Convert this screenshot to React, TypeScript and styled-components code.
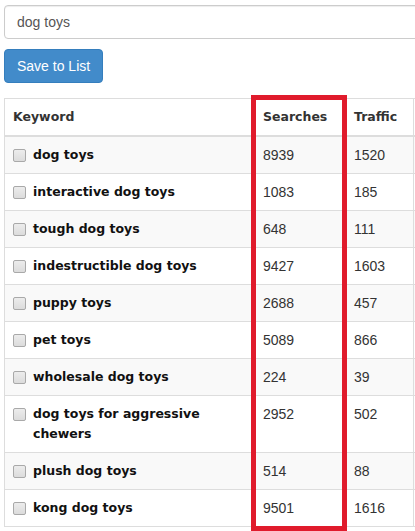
import React from "react";
import styled, { createGlobalStyle } from "styled-components";

type Row = { keyword: string; searches: number; traffic: number };

const rows: Row[] = [
  { keyword: "dog toys", searches: 8939, traffic: 1520 },
  { keyword: "interactive dog toys", searches: 1083, traffic: 185 },
  { keyword: "tough dog toys", searches: 648, traffic: 111 },
  { keyword: "indestructible dog toys", searches: 9427, traffic: 1603 },
  { keyword: "puppy toys", searches: 2688, traffic: 457 },
  { keyword: "pet toys", searches: 5089, traffic: 866 },
  { keyword: "wholesale dog toys", searches: 224, traffic: 39 },
  { keyword: "dog toys for aggressive chewers", searches: 2952, traffic: 502 },
  { keyword: "plush dog toys", searches: 514, traffic: 88 },
  { keyword: "kong dog toys", searches: 9501, traffic: 1616 },
];

const App: React.FC = () => {
  return (
    <>
      <GlobalStyle />
      <Page>
        <SearchInput defaultValue="dog toys" />
        <SaveButton>Save to List</SaveButton>
        <TableWrap>
          <KeywordTable>
            <colgroup>
              <col style={{ width: 250 }} />
              <col style={{ width: 91 }} />
              <col style={{ width: 68 }} />
              <col style={{ width: 80 }} />
            </colgroup>
            <thead>
              <tr>
                <HeadCell>Keyword</HeadCell>
                <HeadCell>Searches</HeadCell>
                <HeadCell>Traffic</HeadCell>
                <HeadCell />
              </tr>
            </thead>
            <tbody>
              {rows.map((row) => (
                <BodyRow key={row.keyword}>
                  <Cell>
                    <KeywordBox>
                      <CheckBox />
                      <KeywordText>{row.keyword}</KeywordText>
                    </KeywordBox>
                  </Cell>
                  <Cell>{row.searches}</Cell>
                  <Cell>{row.traffic}</Cell>
                  <Cell />
                </BodyRow>
              ))}
            </tbody>
          </KeywordTable>
          <Highlight />
        </TableWrap>
      </Page>
    </>
  );
};

export default App;

const GlobalStyle = createGlobalStyle`
  html, body {
    margin: 0;
    padding: 0;
    background: #fff;
    overflow: hidden;
  }
  body {
    font-family: "Liberation Sans", Arial, sans-serif;
    font-size: 14px;
    color: #333;
  }
`;

const Page = styled.div`
  width: 415px;
  height: 531px;
  overflow: hidden;
  padding: 5px 0 0 4px;
  box-sizing: border-box;
  display: flex;
  flex-direction: column;
  align-items: flex-start;
`;

const SearchInput = styled.input`
  width: 440px;
  height: 34px;
  box-sizing: border-box;
  padding: 6px 12px;
  border: 1px solid #ccc;
  border-radius: 4px;
  font-family: "Liberation Sans", Arial, sans-serif;
  font-size: 14px;
  color: #555;
  box-shadow: inset 0 1px 1px rgba(0, 0, 0, 0.075);
  outline: none;
`;

const SaveButton = styled.button`
  margin-top: 10px;
  height: 34px;
  padding: 6px 12px;
  box-sizing: border-box;
  background-color: #428bca;
  border: 1px solid #357ebd;
  border-radius: 4px;
  color: #fff;
  font-family: "Liberation Sans", Arial, sans-serif;
  font-size: 14px;
  line-height: 20px;
  cursor: pointer;
`;

const TableWrap = styled.div`
  position: relative;
  margin-top: 15px;
`;

const KeywordTable = styled.table`
  table-layout: fixed;
  width: 489px;
  border-collapse: collapse;
  border: 1px solid #ddd;
`;

const HeadCell = styled.th`
  text-align: left;
  padding: 8px;
  line-height: 20px;
  border: 1px solid #ddd;
  border-bottom: 2px solid #ddd;
  font-family: "DejaVu Sans", Verdana, sans-serif;
  font-size: 12.5px;
  font-weight: bold;
  color: #333;
  vertical-align: bottom;
`;

const BodyRow = styled.tr`
  &:nth-child(odd) {
    background-color: #f9f9f9;
  }
`;

const Cell = styled.td`
  padding: 8px;
  line-height: 20px;
  border: 1px solid #ddd;
  vertical-align: top;
  color: #333;
`;

const KeywordBox = styled.div`
  display: flex;
  align-items: flex-start;
  gap: 7px;
`;

const CheckBox = styled.span`
  flex: none;
  width: 11px;
  height: 11px;
  margin: 4px 0 0 0;
  border: 1px solid #a9a9a9;
  border-radius: 2px;
  background: linear-gradient(#ececec, #dcdcdc);
`;

const KeywordText = styled.span`
  font-family: "DejaVu Sans", Verdana, sans-serif;
  font-size: 12.5px;
  font-weight: bold;
  color: #111;
`;

const Highlight = styled.div`
  position: absolute;
  left: 247px;
  top: -3px;
  width: 96px;
  height: 436px;
  box-sizing: border-box;
  border: 5px solid #e01b2c;
  pointer-events: none;
`;
